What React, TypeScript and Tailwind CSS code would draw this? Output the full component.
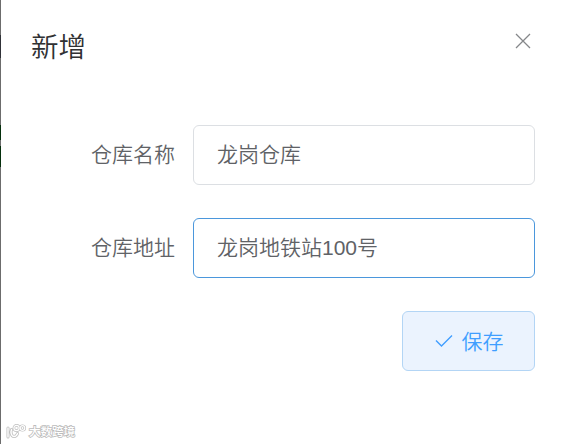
import { useState } from "react";

type FieldProps = {
  label: string;
  value: string;
  focused?: boolean;
  onChange: (value: string) => void;
};

function Field({ label, value, focused, onChange }: FieldProps) {
  return (
    <label className="flex items-center h-[60px]">
      <span className="w-[174px] pr-[18px] text-right text-[21px] font-[350] text-[#606266] whitespace-nowrap">{label}</span>
      <input
        type="text"
        value={value}
        onChange={(e) => onChange(e.target.value)}
        className={`w-[342px] h-[60px] rounded-[6px] border bg-white px-[23px] pb-[5px] text-[21px] font-[350] text-[#606266] outline-none ${
          focused ? "border-[#4b97dc]" : "border-[#dcdfe3]"
        }`}
      />
    </label>
  );
}

function Watermark() {
  return (
    <div className="absolute left-[6px] top-[422px] flex items-center gap-[3px] h-5">
      <svg width="20" height="16" viewBox="0 0 20 16" fill="none" className="text-[#bebebe]">
        <path d="M2 4v9M5.500 5.500C4.500 8 5 12.500 8 12.500c2 0 3-1.500 3.500-3" stroke="currentColor" strokeWidth="3" strokeLinecap="round" />
        <circle cx="10.500" cy="4" r="2.600" stroke="currentColor" strokeWidth="2.600" />
        <circle cx="16.500" cy="4" r="2.300" stroke="currentColor" strokeWidth="2.600" />
        <path d="M2 4v9M5.500 5.500C4.500 8 5 12.500 8 12.500c2 0 3-1.500 3.500-3" stroke="white" strokeWidth="1.400" strokeLinecap="round" />
        <circle cx="10.500" cy="4" r="2.600" stroke="white" strokeWidth="1.200" />
        <circle cx="16.500" cy="4" r="2.300" stroke="white" strokeWidth="1.200" />
      </svg>
      <span className="text-[11.5px] leading-5 font-medium text-white [-webkit-text-stroke:1.6px_#bcbcbc] [paint-order:stroke_fill]">
        大数跨境
      </span>
    </div>
  );
}

export default function App() {
  const [name, setName] = useState("龙岗仓库");
  const [address, setAddress] = useState("龙岗地铁站100号");

  return (
    <div className="relative flex w-[564px] h-[444px] overflow-hidden bg-white font-['Liberation_Sans','Noto_Sans_CJK_SC',sans-serif]">
      {/* sliver of the page behind the drawer */}
      <div className="flex flex-col w-px shrink-0 bg-[#6c6c6c]">
        <div className="h-[23px] mt-[35px] bg-[#303238]" />
        <div className="h-[15px] mt-[67px] bg-[#052f0c]" />
        <div className="h-[21px] mt-[6px] bg-[#052f0c]" />
      </div>

      <div className="flex-1">
        <header className="flex justify-between pl-[30px] pr-[33px] pt-[27px] h-[125px]">
          <h1 className="text-[27.5px] leading-[42px] font-[350] text-[#303133]">新增</h1>
          <button type="button" aria-label="关闭" className="w-4 h-4 mt-[6px]">
            <svg width="16" height="16" viewBox="0 0 16 16" fill="none" stroke="#85878a" strokeWidth="1.300">
              <path d="M1 1l14 14M15 1L1 15" />
            </svg>
          </button>
        </header>

        <form className="flex flex-col gap-[33px] pl-[18px]" onSubmit={(e) => e.preventDefault()}>
          <Field label="仓库名称" value={name} onChange={setName} />
          <Field label="仓库地址" value={address} onChange={setAddress} focused />
          <div className="flex justify-end pr-[29px]">
            <button
              type="submit"
              className="flex items-center justify-center gap-[9px] w-[133px] h-[60px] rounded-[6px] border border-[#b3d5f5] bg-[#ebf3fe] pl-px text-[21px] font-[350] text-[#409eff]"
            >
              <svg width="18" height="14" viewBox="0 0 18 14" fill="none" stroke="currentColor" strokeWidth="1.400">
                <path d="M1 6.500l5.500 5.500L17 1.500" />
              </svg>
              <span className="pt-0.5">保存</span>
            </button>
          </div>
        </form>
      </div>

      <Watermark />
    </div>
  );
}
